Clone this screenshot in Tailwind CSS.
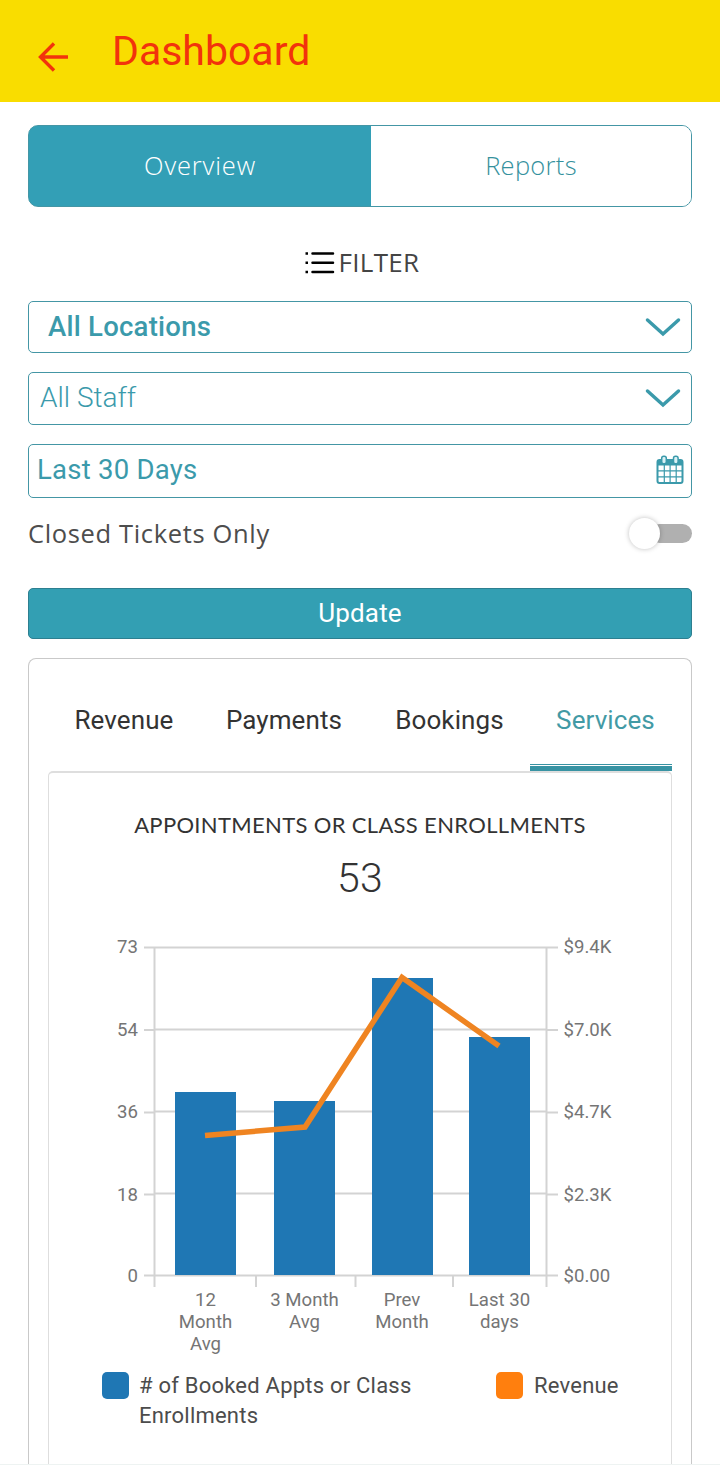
<!DOCTYPE html>
<html lang="en">
<head>
<meta charset="utf-8">
<title>Dashboard</title>
<script src="https://cdn.jsdelivr.net/npm/@tailwindcss/browser@4"></script>
</head>
<body class="flex h-[1465px] w-[720px] flex-col overflow-hidden bg-white font-['Roboto',sans-serif] text-[#333]">
  <header class="flex h-[102px] shrink-0 items-start bg-[#f9dd00] pl-[38px] text-[#f2330c]">
    <svg class="mt-[41px] h-8 w-[31px]" viewBox="0 0 31 32" fill="none" stroke="currentColor" stroke-width="3.400"><path d="M30 16H2.500M16 2.500L2.500 16L16 29.500"/></svg>
    <h1 class="ml-[43px] mt-[21px] text-[41px] leading-[60px]">Dashboard</h1>
  </header>

  <main class="flex min-h-0 grow flex-col px-7 pt-[23px]">
    <nav class="flex h-[82px] shrink-0 overflow-hidden rounded-[10px] border border-[#4496a5] bg-[linear-gradient(to_right,#339fb6_50%,white_50%)] font-['Open_Sans',sans-serif] text-[25.500px] font-light">
      <a class="flex w-[342px] items-center justify-center bg-[#339fb6] pb-0.5 tracking-[0.850px] text-white">Overview</a>
      <a class="flex grow items-center justify-center bg-white pb-0.5 tracking-[0.300px] text-[#35919d]">Reports</a>
    </nav>

    <div class="mt-[36px] flex h-10 shrink-0 items-center justify-center gap-1 pl-1">
      <svg class="h-6 w-[30px]" viewBox="0 0 30 24" fill="none" stroke="#000" stroke-width="2.500"><path d="M0.500 2.500h2.500M0.500 11.800h2.500M0.500 21h2.500"/><path stroke-linecap="round" d="M7.500 2.500h20.500M7.500 11.800h20.500M7.500 21h20.500"/></svg>
      <span class="pb-0.5 font-['Open_Sans',sans-serif] text-[26px] tracking-[0.300px] text-[#444]">FILTER</span>
    </div>

    <div class="mt-[18px] flex h-[52px] shrink-0 items-center justify-between rounded-[5px] border border-[#4496a5] pl-[19px] pr-[10px] text-[#3b9aab]">
      <span class="text-[27.500px] font-medium tracking-[0.240px]">All Locations</span>
      <svg class="h-5 w-9" viewBox="0 0 36 20" fill="none" stroke="currentColor" stroke-width="3.500" stroke-linecap="round"><path d="M2.500 3L18 17L33.500 3"/></svg>
    </div>
    <div class="mt-[19px] flex h-[53px] shrink-0 items-center justify-between rounded-[5px] border border-[#4496a5] pb-px pl-[11px] pr-[10px] text-[#3b9aab]">
      <span class="text-[28px] font-light">All Staff</span>
      <svg class="h-5 w-9" viewBox="0 0 36 20" fill="none" stroke="currentColor" stroke-width="3.500" stroke-linecap="round"><path d="M2.500 3L18 17L33.500 3"/></svg>
    </div>
    <div class="mt-[19px] flex h-[54px] shrink-0 items-center justify-between rounded-[5px] border border-[#4496a5] pb-0.5 pl-[8px] pr-[7px] text-[#3b9aab]">
      <span class="text-[27.500px] tracking-[0.250px]">Last 30 Days</span>
      <svg class="mb-0.5 h-[29px] w-7" viewBox="0.500 0 28 29">
        <rect x="2" y="5" width="25" height="23" rx="2" fill="#fff" stroke="currentColor" stroke-width="2"/>
        <path d="M2 5h25v5.500H2z" fill="currentColor"/>
        <path d="M8.800 10v17M14.600 10v17M20.700 10v17M2 15.800h25M2 21.800h25" stroke="currentColor" stroke-width="1.200"/>
        <rect x="6.200" y="1.300" width="4.600" height="7.500" rx="2" fill="#d9f1f5" stroke="currentColor" stroke-width="1.500"/>
        <rect x="18" y="1.300" width="4.600" height="7.500" rx="2" fill="#d9f1f5" stroke="currentColor" stroke-width="1.500"/>
      </svg>
    </div>

    <div class="mt-[15px] flex h-10 shrink-0 items-center justify-between">
      <span class="font-['Open_Sans',sans-serif] text-[25.500px] tracking-[0.650px] text-[#4d4d4d]">Closed Tickets Only</span>
      <div class="flex items-center">
        <i class="z-10 size-[31px] rounded-full bg-white shadow-[0_0_5px_rgba(0,0,0,0.25)]"></i>
        <i class="-ml-[10px] h-[19px] w-[42px] rounded-full bg-[#b0b0b0]"></i>
      </div>
    </div>

    <button class="mt-[35px] h-[51px] shrink-0 rounded-[5px] border border-[#2d7f90] bg-[#339fb3] text-[26px] tracking-[0.150px] text-white">Update</button>

    <section class="mt-[19px] flex min-h-0 grow flex-col rounded-t-[8px] border border-b-0 border-[#c9c9c9] px-[19px]">
      <nav class="flex h-[112px] shrink-0 text-[26px] tracking-[0.100px]">
        <a class="flex w-[151px] items-center justify-center pl-px pt-[10px]">Revenue</a>
        <a class="flex w-[169px] items-center justify-center pl-px pt-[10px]">Payments</a>
        <a class="flex w-[162px] items-center justify-center pl-px pt-[10px]">Bookings</a>
        <div class="flex w-[142px] flex-col text-[#429aa5]">
          <a class="flex h-[105px] items-center justify-center pl-[9px] pt-[17px]">Services</a>
          <i class="h-px bg-[#3893a3]"></i>
          <i class="mt-px h-[5px] bg-[#3893a3]"></i>
        </div>
      </nav>
      <div class="flex grow flex-col rounded-t-[5px] border border-b-0 border-t-2 border-[#dedede]">
        <h2 class="mt-[34px] text-center font-['Lato',sans-serif] text-[22px] leading-9 tracking-[0.330px]">APPOINTMENTS OR CLASS ENROLLMENTS</h2>
        <p class="mt-2 text-center text-[41px] font-light leading-[54px] tracking-[0.300px]">53</p>
        <svg class="mt-[15px] h-[440px] w-[622px] shrink-0" viewBox="49 920 622 440">
          <g fill="none" stroke="#d3d3d3" stroke-width="2">
            <path d="M144 947.500H558M154 1029.500H547M154 1111.500H547M154 1193.500H547M144 1275.500H558"/>
            <path d="M144 1030H154M144 1112.500H154M144 1194.500H154M547 1030H558M547 1112.500H558M547 1194.500H558"/>
            <path d="M154.500 947V1287M256 1276V1287M355.500 1276V1287M453 1276V1287M546.500 947V1287"/>
          </g>
          <path fill="#1f77b4" d="M175 1092h61v183h-61zM274 1101h61v174h-61zM372 978h61v297h-61zM469 1037h61v238h-61z"/>
          <path d="M205 1135.500L305 1127L402 977.500L499 1046" fill="none" stroke="#ef8421" stroke-width="5.500"/>
          <g fill="#757575" font-size="18.600">
            <g text-anchor="end">
              <text x="138" y="953">73</text><text x="138" y="1036">54</text><text x="138" y="1118">36</text><text x="138" y="1201">18</text><text x="138" y="1282">0</text>
            </g>
            <text x="563.500" y="953">$9.4K</text><text x="563.500" y="1036">$7.0K</text><text x="563.500" y="1118">$4.7K</text><text x="563.500" y="1201">$2.3K</text><text x="563.500" y="1282">$0.00</text>
            <g text-anchor="middle">
              <text x="205.500" y="1306">12</text><text x="205.500" y="1328">Month</text><text x="205.500" y="1350">Avg</text>
              <text x="304.500" y="1306">3 Month</text><text x="304.500" y="1328">Avg</text>
              <text x="402" y="1306">Prev</text><text x="402" y="1328">Month</text>
              <text x="499.500" y="1306">Last 30</text><text x="499.500" y="1328">days</text>
            </g>
          </g>
        </svg>
        <div class="mt-[11px] flex items-start pl-[53px] text-[22px] leading-[30px] tracking-[0.220px] text-[#4c4c4c]">
          <i class="mt-px size-[27px] shrink-0 rounded-[5px] bg-[#1f77b4]"></i>
          <span class="ml-[10px] w-[357px]"># of Booked Appts or Class<br>Enrollments</span>
          <i class="mt-px size-[27px] shrink-0 rounded-[5px] bg-[#ff7f0e]"></i>
          <span class="ml-[11px]">Revenue</span>
        </div>
      </div>
    </section>
  </main>
  <div class="h-px shrink-0 bg-[#eef3f2]"></div>
</body>
</html>
